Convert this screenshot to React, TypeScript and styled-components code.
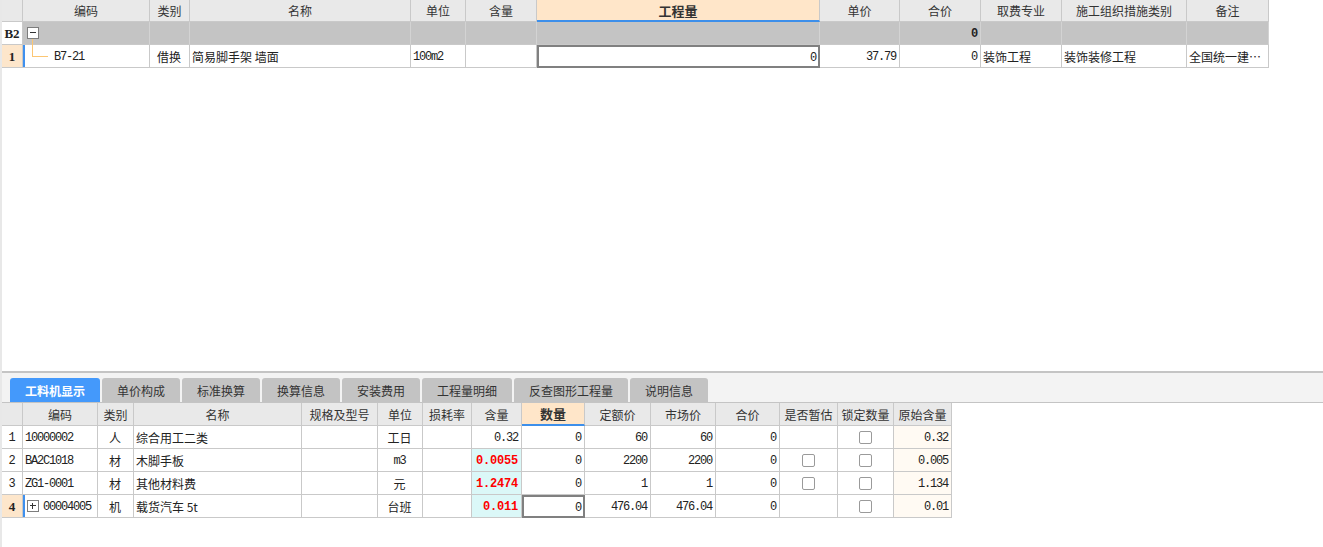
import React from 'react';
import styled, { createGlobalStyle, css } from 'styled-components';

const GlobalStyle = createGlobalStyle`
  html, body {
    margin: 0;
    padding: 0;
    background: #ffffff;
  }
  body {
    font-family: "Noto Sans CJK SC", "Liberation Sans", sans-serif;
    font-size: 12px;
    color: #222;
  }
`;

const MONO = `"Liberation Mono", "Noto Sans CJK SC", monospace`;

const Page = styled.div`
  height: 547px;
  display: flex;
  flex-direction: column;
  border-left: 2px solid #e8e8e8;
  overflow: hidden;
`;

const TopPane = styled.div`
  height: 371px;
  background: #fff;
`;

const BottomPane = styled.div`
  flex: 1;
  display: flex;
  flex-direction: column;
  border-top: 2px solid #c4c4c4;
`;

const TabBar = styled.div`
  height: 30px;
  box-sizing: border-box;
  background: #f3f3f3;
  border-bottom: 1px solid #c4c4c4;
  padding: 5px 0 0 10px;
  margin-left: -2px;
  display: flex;
  gap: 2px;
`;

const Tab = styled.div<{ $active?: boolean; $w: number }>`
  width: ${p => p.$w}px;
  height: 24px;
  border-radius: 3px 3px 0 0;
  display: flex;
  align-items: center;
  justify-content: center;
  background: ${p => (p.$active ? '#4499fb' : '#c3c3c3')};
  color: ${p => (p.$active ? '#fff' : '#333')};
  font-weight: ${p => (p.$active ? 600 : 400)};
`;

const Row = styled.div<{ $cols: string; $h: number }>`
  display: grid;
  grid-template-columns: ${p => p.$cols};
  height: ${p => p.$h}px;
`;

const HeadCell = styled.div<{ $hot?: boolean }>`
  box-sizing: border-box;
  background: ${p => (p.$hot ? '#ffe6c9' : '#e9e9e9')};
  border-right: 1px solid #c9c9c9;
  border-bottom: ${p => (p.$hot ? '2px solid #3d8fea' : '1px solid #c9c9c9')};
  display: flex;
  align-items: center;
  justify-content: center;
  color: #333;
  white-space: nowrap;
  overflow: hidden;
  font-size: ${p => (p.$hot ? '13px' : '12px')};
  font-weight: ${p => (p.$hot ? 700 : 400)};
`;

type Align = 'left' | 'center' | 'right';

const monoText = css`
  font-family: ${MONO};
  font-size: 12px;
  letter-spacing: -1.2px;
`;

const Cell = styled.div<{
  $align?: Align;
  $mono?: boolean;
  $bg?: string;
  $red?: boolean;
  $focus?: boolean;
  $marker?: boolean;
  $group?: boolean;
  $pad?: number;
}>`
  position: relative;
  box-sizing: border-box;
  border-right: 1px solid ${p => (p.$group ? '#d3d3d3' : '#c9c9c9')};
  border-bottom: 1px solid #c9c9c9;
  background: ${p => p.$bg || (p.$group ? '#c4c4c4' : '#fff')};
  display: flex;
  align-items: center;
  justify-content: ${p =>
    p.$align === 'right' ? 'flex-end' : p.$align === 'center' ? 'center' : 'flex-start'};
  padding: 0 3px 0 ${p => (p.$pad !== undefined ? p.$pad : 2)}px;
  white-space: nowrap;
  color: #222;
  ${p =>
    p.$mono &&
    css`
      ${monoText}
      padding-top: 2px;
    `}
  ${p =>
    p.$red &&
    css`
      color: #ff0000;
      font-weight: 700;
      letter-spacing: -0.2px;
    `}
  ${p =>
    p.$focus &&
    css`
      border: 2px solid #808080;
      padding-right: 2px;
    `}
  ${p =>
    p.$marker &&
    css`
      box-shadow: inset 2px 0 0 #3f90ee;
    `}
`;

const NumCell = styled.div<{ $kind: 'plain' | 'active' | 'group' }>`
  box-sizing: border-box;
  border-right: 1px solid #c9c9c9;
  border-bottom: 1px solid #c9c9c9;
  display: flex;
  align-items: center;
  justify-content: center;
  padding-top: 1px;
  background: ${p => (p.$kind === 'active' ? '#fde6cb' : '#fff')};
  font-family: ${p => (p.$kind === 'plain' ? MONO : '"Liberation Serif", serif')};
  font-size: ${p => (p.$kind === 'plain' ? '12px' : '13px')};
  font-weight: ${p => (p.$kind === 'plain' ? 400 : 700)};
  color: #222;
`;

const ExpandBox = styled.span<{ $plus?: boolean }>`
  position: relative;
  display: inline-block;
  width: 12px;
  height: 12px;
  box-sizing: border-box;
  border: 1px solid #7d7d7d;
  background: #fff;
  margin-right: 4px;
  flex: none;
  &::before {
    content: '';
    position: absolute;
    left: 2px;
    right: 2px;
    top: 4px;
    height: 1px;
    background: #333;
  }
  ${p =>
    p.$plus &&
    css`
      &::after {
        content: '';
        position: absolute;
        top: 2px;
        bottom: 2px;
        left: 4px;
        width: 1px;
        background: #333;
      }
    `}
`;

const TreeLine = styled.span`
  position: absolute;
  left: 9px;
  top: -6px;
  width: 16px;
  height: 18px;
  border-left: 1px solid #fcc673;
  border-bottom: 1px solid #fcc673;
  box-sizing: border-box;
`;

const Mono = styled.span`
  ${monoText}
  padding-top: 2px;
`;

const Check = styled.span`
  display: inline-block;
  width: 13px;
  height: 13px;
  box-sizing: border-box;
  border: 1px solid #9a9a9a;
  border-radius: 2px;
  background: #fff;
`;

const TOP_COLS = '21px 127px 40px 221px 55px 71px 283px 80px 81px 81px 125px 82px';
const TOP_HEAD = ['', '编码', '类别', '名称', '单位', '含量', '工程量', '单价', '合价', '取费专业', '施工组织措施类别', '备注'];

const BOT_COLS = '21px 75px 36px 168px 76px 45px 49px 50px 63px 66px 65px 64px 58px 56px 58px';
const BOT_HEAD = ['', '编码', '类别', '名称', '规格及型号', '单位', '损耗率', '含量', '数量', '定额价', '市场价', '合价', '是否暂估', '锁定数量', '原始含量'];

interface Item {
  code: string;
  kind: string;
  name: string;
  unit: string;
  monoUnit?: boolean;
  qty: string;
  red?: boolean;
  price: string;
  market: string;
  est: boolean;
  orig: string;
  expand?: boolean;
}

const items: Item[] = [
  { code: '10000002', kind: '人', name: '综合用工二类', unit: '工日', qty: '0.32', price: '60', market: '60', est: false, orig: '0.32' },
  { code: 'BA2C1018', kind: '材', name: '木脚手板', unit: 'm3', monoUnit: true, qty: '0.0055', red: true, price: '2200', market: '2200', est: true, orig: '0.005' },
  { code: 'ZG1-0001', kind: '材', name: '其他材料费', unit: '元', qty: '1.2474', red: true, price: '1', market: '1', est: true, orig: '1.134' },
  { code: '00004005', kind: '机', name: '载货汽车 5t', unit: '台班', qty: '0.011', red: true, price: '476.04', market: '476.04', est: false, orig: '0.01', expand: true },
];

const App: React.FC = () => {
  return (
    <>
      <GlobalStyle />
      <Page>
        <TopPane>
          <Row $cols={TOP_COLS} $h={22}>
            {TOP_HEAD.map((h, i) => (
              <HeadCell key={i} $hot={i === 6}>{h}</HeadCell>
            ))}
          </Row>
          <Row $cols={TOP_COLS} $h={23}>
            <NumCell $kind="group">B2</NumCell>
            <Cell $group $pad={4}>
              <ExpandBox />
            </Cell>
            <Cell $group />
            <Cell $group />
            <Cell $group />
            <Cell $group />
            <Cell $group />
            <Cell $group />
            <Cell $group $align="right" $mono>
              <b>0</b>
            </Cell>
            <Cell $group />
            <Cell $group />
            <Cell $group />
          </Row>
          <Row $cols={TOP_COLS} $h={23}>
            <NumCell $kind="active">1</NumCell>
            <Cell $marker $mono $pad={31}>
              <TreeLine />
              B7-21
            </Cell>
            <Cell $align="center">借换</Cell>
            <Cell>简易脚手架 墙面</Cell>
            <Cell $mono>100m2</Cell>
            <Cell />
            <Cell $focus $align="right" $mono>0</Cell>
            <Cell $align="right" $mono>37.79</Cell>
            <Cell $align="right" $mono>0</Cell>
            <Cell>装饰工程</Cell>
            <Cell>装饰装修工程</Cell>
            <Cell>全国统一建…</Cell>
          </Row>
        </TopPane>
        <BottomPane>
          <TabBar>
            <Tab $active $w={90}>工料机显示</Tab>
            <Tab $w={78}>单价构成</Tab>
            <Tab $w={78}>标准换算</Tab>
            <Tab $w={78}>换算信息</Tab>
            <Tab $w={78}>安装费用</Tab>
            <Tab $w={90}>工程量明细</Tab>
            <Tab $w={114}>反查图形工程量</Tab>
            <Tab $w={78}>说明信息</Tab>
          </TabBar>
          <Row $cols={BOT_COLS} $h={23}>
            {BOT_HEAD.map((h, i) => (
              <HeadCell key={i} $hot={i === 8}>{h}</HeadCell>
            ))}
          </Row>
          {items.map((it, i) => {
            const last = i === items.length - 1;
            return (
              <Row key={it.code} $cols={BOT_COLS} $h={23}>
                <NumCell $kind={last ? 'active' : 'plain'}>{i + 1}</NumCell>
                <Cell $marker={last} $pad={last ? 4 : 2}>
                  {it.expand && <ExpandBox $plus />}
                  <Mono>{it.code}</Mono>
                </Cell>
                <Cell $align="center">{it.kind}</Cell>
                <Cell>{it.name}</Cell>
                <Cell />
                <Cell $align="center" $mono={it.monoUnit}>{it.unit}</Cell>
                <Cell />
                <Cell $align="right" $mono $red={it.red} $bg={it.red ? '#dbf8f8' : undefined}>
                  {it.qty}
                </Cell>
                <Cell $align="right" $mono $focus={last}>0</Cell>
                <Cell $align="right" $mono>{it.price}</Cell>
                <Cell $align="right" $mono>{it.market}</Cell>
                <Cell $align="right" $mono>0</Cell>
                <Cell $align="center">{it.est && <Check />}</Cell>
                <Cell $align="center"><Check /></Cell>
                <Cell $align="right" $mono $bg="#fffaf3">{it.orig}</Cell>
              </Row>
            );
          })}
        </BottomPane>
      </Page>
    </>
  );
};

export default App;
